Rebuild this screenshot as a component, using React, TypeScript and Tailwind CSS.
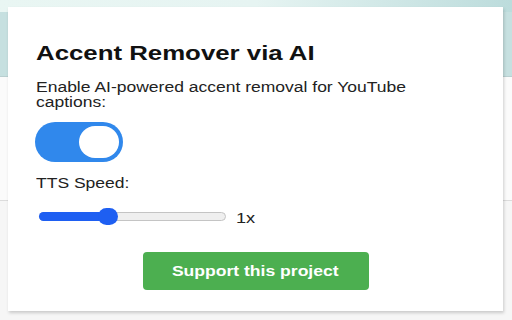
import React from "react";

export default function App() {
  return (
    <div
      className="relative w-[512px] h-[320px] overflow-hidden bg-[#fafafa]"
      style={{ fontFamily: '"Liberation Sans", Arial, sans-serif' }}
    >
      {/* background page behind the popup */}
      <div className="flex flex-col w-full h-full">
        <div className="h-[12px] w-full bg-gradient-to-r from-[#e9f6f3] via-[#e6f4f2] to-[#bcdcdc]" />
        <div className="h-[65px] w-full bg-[#c6e0e0] border-b border-[#b9cfd0]" />
        <div className="h-[124px] w-full bg-[#fbfbfb] border-b border-[#dcdcdc]" />
        <div className="flex-1 w-full bg-[#f6f6f6]" />
      </div>

      {/* popup */}
      <div className="absolute left-[8px] top-[7px] w-[495px] h-[304px] bg-white shadow-[1px_2px_3px_rgba(0,0,0,0.18)] pl-[28px] pr-[28px] pt-[34px] flex flex-col">
        <h1 className="text-[20px] font-bold text-[#111] leading-[24px]">
          <span className="inline-block origin-left scale-x-[1.29]">Accent Remover via AI</span>
        </h1>
        <p className="mt-[15px] text-[14px] leading-[15px] text-[#222]">
          <span className="inline-block origin-left scale-x-[1.25]">
            Enable AI-powered accent removal for YouTube
            <br />
            captions:
          </span>
        </p>

        {/* toggle */}
        <div className="mt-[12px] -ml-[1px] w-[88px] h-[40px] rounded-full bg-[#3088ec] flex items-center justify-end pr-[4px]">
          <div className="w-[40px] h-[32px] rounded-full bg-white" />
        </div>

        <div className="mt-[13px] text-[14px] leading-[16px] text-[#222]">
          <span className="inline-block origin-left scale-x-[1.25]">TTS Speed:</span>
        </div>

        {/* slider */}
        <div className="mt-[12px] ml-[3px] flex items-center">
          <div className="relative w-[187px] h-[9px] rounded-full bg-[#efefef] border border-[#c4c4c4]">
            <div className="absolute left-[-1px] top-[-1px] h-[9px] w-[64px] rounded-full bg-[#1e5ff2]" />
            <div className="absolute left-[58px] top-[-5px] w-[20px] h-[17px] rounded-full bg-[#1e5ff2]" />
          </div>
          <span className="ml-[10px] mt-[5px] text-[14px] text-[#222] inline-block origin-left scale-x-[1.3]">
            1x
          </span>
        </div>

        {/* button */}
        <div className="mt-[23px] flex justify-center">
          <button className="w-[226px] h-[38px] rounded-[4px] bg-[#4caf50] text-white font-bold text-[15px]">
            <span className="inline-block scale-x-[1.17]">Support this project</span>
          </button>
        </div>
      </div>
    </div>
  );
}
